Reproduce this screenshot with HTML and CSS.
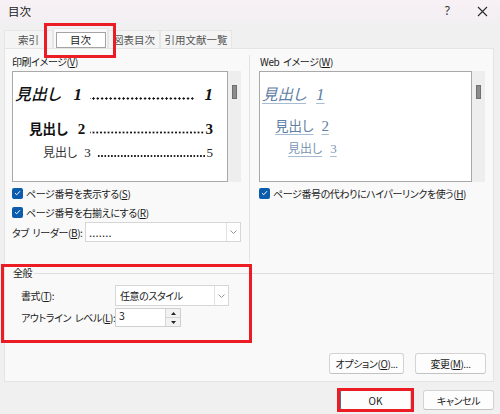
FILE: index.html
```html
<!DOCTYPE html>
<html lang="ja">
<head>
<meta charset="utf-8">
<title>目次</title>
<link rel="stylesheet" href="styles.css">
</head>
<body>
<div class="window">
  <header class="titlebar">
    <span class="title">目次</span>
    <span class="help">?</span>
    <span class="close"><svg width="11" height="11" viewBox="0 0 11 11"><path d="M1 1L10 10M10 1L1 10" stroke="#2b2b2b" stroke-width="1.1" fill="none"/></svg></span>
  </header>
  <nav class="tabs">
    <div class="tab t1">索引</div>
    <div class="tab t2 active"><span class="tab-focus">目次</span></div>
    <div class="tab t3">図表目次</div>
    <div class="tab t4">引用文献一覧</div>
  </nav>
  <main class="panel">
    <div class="columns">
      <section class="col col-left">
        <div class="cap">印刷イメージ(<u>V</u>)</div>
        <div class="preview-wrap">
          <div class="preview print">
            <div class="toc p1"><span class="head">見出し</span><span class="num">1</span><span class="dots"></span><span class="pg">1</span></div>
            <div class="toc p2"><span class="head">見出し</span><span class="num">2</span><span class="dots"></span><span class="pg">3</span></div>
            <div class="toc p3"><span class="head">見出し</span><span class="num">3</span><span class="dots"></span><span class="pg">5</span></div>
          </div>
          <div class="vscroll"><div class="thumb"></div></div>
        </div>
        <div class="check-row"><span class="cb"><svg width="7" height="6" viewBox="0 0 7 6"><path d="M1 3.2L2.7 4.8L6 1.2" stroke="#fff" stroke-width="1" fill="none"/></svg></span><span>ページ番号を表示する(<u>S</u>)</span></div>
        <div class="check-row"><span class="cb"><svg width="7" height="6" viewBox="0 0 7 6"><path d="M1 3.2L2.7 4.8L6 1.2" stroke="#fff" stroke-width="1" fill="none"/></svg></span><span>ページ番号を右揃えにする(<u>R</u>)</span></div>
        <div class="leader-row">
          <span class="leader-lbl">タブ リーダー(<u>B</u>):</span>
          <div class="select leader"><span class="sel-text">.......</span><span class="sel-arrow"><svg width="7" height="4" viewBox="0 0 7 4"><path d="M0.5 0.5L3.5 3.5L6.5 0.5" stroke="#8a8a8a" stroke-width="0.9" fill="none"/></svg></span></div>
        </div>
      </section>
      <div class="vsep"></div>
      <section class="col col-right">
        <div class="cap">Web イメージ(<u>W</u>)</div>
        <div class="preview-wrap">
          <div class="preview web">
            <div class="wl w1"><span>見出し<span class="num">1</span></span></div>
            <div class="wl w2"><span>見出し<span class="num">2</span></span></div>
            <div class="wl w3"><span>見出し<span class="num">3</span></span></div>
          </div>
          <div class="vscroll"><div class="thumb"></div></div>
        </div>
        <div class="check-row"><span class="cb"><svg width="7" height="6" viewBox="0 0 7 6"><path d="M1 3.2L2.7 4.8L6 1.2" stroke="#fff" stroke-width="1" fill="none"/></svg></span><span>ページ番号の代わりにハイパーリンクを使う(<u>H</u>)</span></div>
      </section>
    </div>
    <section class="group">
      <div class="legend"><span class="legend-text">全般</span><span class="legend-line"></span></div>
      <div class="g-row">
        <span class="g-lbl">書式(<u>T</u>):</span>
        <div class="select style-sel"><span class="sel-text">任意のスタイル</span><span class="sel-arrow"><svg width="7" height="4" viewBox="0 0 7 4"><path d="M0.5 0.5L3.5 3.5L6.5 0.5" stroke="#8a8a8a" stroke-width="0.9" fill="none"/></svg></span></div>
      </div>
      <div class="g-row g-row2">
        <span class="g-lbl">アウトライン レベル(<u>L</u>):</span>
        <div class="spin">
          <span class="spin-val">3</span>
          <span class="spin-btns">
            <span class="spin-btn"><svg width="5" height="3" viewBox="0 0 5 3"><path d="M0 3L2.5 0L5 3Z" fill="#222"/></svg></span>
            <span class="spin-btn"><svg width="5" height="3" viewBox="0 0 5 3"><path d="M0 0L2.5 3L5 0Z" fill="#222"/></svg></span>
          </span>
        </div>
      </div>
    </section>
    <div class="actions">
      <button class="btn opt">オプション(<u>O</u>)...</button>
      <button class="btn mod">変更(<u>M</u>)...</button>
    </div>
  </main>
  <footer class="footer">
    <button class="btn ok">OK</button>
    <button class="btn cancel">キャンセル</button>
  </footer>
  <div class="mark mark-tab"></div>
  <div class="mark mark-group"></div>
  <div class="mark mark-ok"></div>
</div>
</body>
</html>
```
FILE: styles.css
```css
* { box-sizing: border-box; margin: 0; padding: 0; }
html, body { width: 500px; height: 414px; overflow: hidden; }
body {
  background: #f0f0f0;
  font-family: "Noto Sans CJK JP", "Noto Sans", sans-serif;
  font-size: 10px;
  letter-spacing: -0.4px;
  word-spacing: 2px;
  color: #1b1b1b;
  font-feature-settings: "palt";
}
u { text-decoration: underline; text-underline-offset: 1px; }
.window {
  position: relative;
  width: 500px;
  height: 414px;
  display: flex;
  flex-direction: column;
  background: #f0f0f0;
}
/* title bar */
.titlebar {
  height: 22px;
  display: flex;
  align-items: center;
  padding-left: 8px;
  padding-right: 12px;
  background: linear-gradient(#f8f1f5, #f3eff2);
}
.title { font-size: 11.5px; letter-spacing: 0; flex: 1; line-height: 20px; }
.help { font-size: 12px; letter-spacing: 0; color: #333; margin-right: 27px; line-height: 20px; font-family: "Noto Sans", sans-serif; }
.close { display: flex; align-items: center; }
/* tabs */
.tabs {
  height: 26px;
  display: flex;
  align-items: flex-end;
  padding-left: 4px;
}
.tab {
  height: 18px;
  display: flex;
  align-items: center;
  justify-content: center;
  color: #555;
  background: #f4f4f4;
  border: 1px solid #e6e6e6;
  border-bottom: none;
  font-size: 10.5px;
  letter-spacing: 0;
}
.t1 { width: 49px; }
.t2 { width: 55px; height: 20px; background: #f9f9f9; border-color: #e6e6e6; }
.t3 { width: 52px; }
.t4 { width: 72px; }
.tab-focus {
  width: 50px;
  height: 16px;
  margin-top: 2px;
  display: flex;
  align-items: center;
  justify-content: center;
  background: #fff;
  border: 1px solid #a3a3a3;
  color: #1b1b1b;
}
/* panel */
.panel {
  width: 490px;
  height: 334px;
  margin-left: 4px;
  background: #f9f9f9;
  border: 1px solid #e4e4e4;
  display: flex;
  flex-direction: column;
}
.columns {
  height: 213px;
  display: flex;
  padding: 6px 7px 0 7px;
}
.col-left { width: 229px; }
.col-right { width: 226px; }
.vsep { width: 1px; background: #e2e2e2; margin: 0 9px 0 8px; }
.cap { height: 14px; line-height: 14px; margin-bottom: 2px; }
.col-right .cap { padding-left: 1px; }
.preview-wrap { height: 111px; display: flex; }
.preview {
  flex: 1;
  background: #fff;
  border: 1px solid #a9a9a9;
  overflow: hidden;
  letter-spacing: 0;
  word-spacing: 0;
}
.vscroll { width: 13px; background: #eeeeee; }
.thumb {
  width: 5px;
  height: 14px;
  margin: 14px 0 0 4px;
  background: #8c8c8c;
  border: 1px solid #6f6f6f;
}
/* print preview */
.print { padding: 11px 14px 0 2px; }
.toc {
  display: flex;
  align-items: baseline;
  white-space: nowrap;
  font-family: "Liberation Serif", "Noto Sans CJK JP", serif;
  color: #111;
}
.toc .dots {
  flex: 1;
  height: 3px;
  margin-right: 3px;
  background-repeat: repeat-x;
  background-position: right bottom;
}
.p1 { font-size: 17px; line-height: 20px; font-style: italic; font-weight: bold; }
.p1 .head { font-family: "Noto Sans CJK JP", sans-serif; font-weight: 500; font-style: italic; font-size: 16px; }
.p1 .num { margin-left: 13px; margin-right: 8px; }
.p1 .pg { margin-left: 7px; }
.p1 .dots {
  height: 3px;
  background-image: radial-gradient(circle at 50% 50%, #111 0.95px, transparent 1.35px);
  background-size: 4.3px 3px;
}
.p2 { font-size: 15px; line-height: 20px; font-weight: bold; margin-top: 13px; padding-left: 14px; }
.p2 .head { font-family: "Noto Sans CJK JP", sans-serif; font-weight: 700; font-size: 13.5px; }
.p2 .num { margin-left: 10px; margin-right: 5px; }
.p2 .dots {
  margin-right: 1px;
  height: 3px;
  background-image: radial-gradient(circle at 50% 50%, #111 0.85px, transparent 1.25px);
  background-size: 3.75px 3px;
}
.p3 { font-size: 13px; line-height: 16px; margin-top: 5px; padding-left: 28px; color: #222; }
.p3 .head { font-family: "Noto Sans CJK JP", sans-serif; font-size: 12px; color: #333; }
.p3 .num { margin-left: 7px; margin-right: 6px; }
.p3 .dots {
  margin-right: 1px;
  height: 2px;
  background-image: radial-gradient(circle at 50% 50%, #222 0.65px, transparent 1.05px);
  background-size: 3.3px 2px;
}
/* web preview */
.web { padding: 11px 0 0 2px; }
.wl {
  font-family: "Liberation Serif", "Noto Sans CJK JP", serif;
  color: #5f80a6;
  white-space: nowrap;
}
.wl > span {
  text-decoration: underline;
  text-decoration-color: #a7bcd2;
  text-underline-offset: 3px;
}
.wl .num { margin-left: 10px; }
.w1 { font-size: 17px; line-height: 20px; font-style: italic; }
.w1 > span { font-family: "Noto Sans CJK JP", sans-serif; font-size: 15.5px; font-style: italic; }
.w1 .num { font-family: "Liberation Serif", serif; font-size: 17px; }
.w2 { font-size: 15px; line-height: 20px; margin-top: 10px; padding-left: 13px; }
.w2 > span { font-family: "Noto Sans CJK JP", sans-serif; font-size: 13.5px; }
.w2 .num { font-family: "Liberation Serif", serif; font-size: 15px; margin-left: 8px; }
.w3 { font-size: 13px; line-height: 16px; margin-top: 4px; padding-left: 26px; color: #7b96b6; }
.w3 > span { font-family: "Noto Sans CJK JP", sans-serif; font-size: 12px; }
.w3 .num { font-family: "Liberation Serif", serif; font-size: 13px; margin-left: 8px; }
/* checkboxes */
.check-row {
  height: 16px;
  margin-top: 3px;
  display: flex;
  align-items: center;
  white-space: nowrap;
}
.cb {
  width: 11px;
  height: 11px;
  margin-right: 3px;
  border-radius: 2px;
  background: #0b5cad;
  display: flex;
  align-items: center;
  justify-content: center;
}
/* selects */
.leader-row {
  height: 20px;
  margin-top: 2px;
  display: flex;
  align-items: center;
}
.leader-lbl { width: 73px; white-space: nowrap; }
.select {
  height: 100%;
  display: flex;
  background: #fff;
  border: 1px solid #d6d6d6;
}
.leader { width: 156px; }
.sel-text { flex: 1; padding-left: 3px; display: flex; align-items: center; white-space: nowrap; }
.leader .sel-text { letter-spacing: 0.2px; font-size: 11px; }
.sel-arrow {
  width: 14px;
  border-left: 1px solid #e2e2e2;
  display: flex;
  align-items: center;
  justify-content: center;
}
/* group */
.group { display: flex; flex-direction: column; }
.legend {
  height: 14px;
  margin-top: 4px;
  display: flex;
  align-items: center;
  padding-left: 8px;
}
.legend-text { line-height: 14px; }
.legend-line { flex: 1; height: 1px; background: #dedede; margin-left: 2px; }
.g-row {
  height: 21px;
  margin-top: 5px;
  display: flex;
  align-items: center;
  padding-left: 16px;
}
.g-row2 { height: 19px; margin-top: 2px; }
.g-lbl { width: 94px; white-space: nowrap; }
.style-sel { width: 114px; }
.style-sel .sel-text { padding-left: 4px; }
.spin {
  width: 66px;
  height: 100%;
  display: flex;
  background: #fff;
  border: 1px solid #cfcfcf;
}
.spin-val { flex: 1; padding-left: 3px; line-height: 14px; font-size: 10.5px; }
.spin-btns { width: 15px; display: flex; flex-direction: column; border-left: 1px solid #d6d6d6; }
.spin-btn {
  flex: 1;
  display: flex;
  align-items: center;
  justify-content: center;
  background: #f2f2f2;
}
.spin-btn + .spin-btn { border-top: 1px solid #d6d6d6; }
/* buttons */
.btn {
  height: 21px;
  font-family: inherit;
  font-size: 10px;
  letter-spacing: -0.4px;
  font-feature-settings: "palt";
  color: #1b1b1b;
  background: #fdfdfd;
  border: 1px solid #d3d3d3;
  border-bottom-color: #c2c2c2;
  border-radius: 3px;
  display: flex;
  align-items: center;
  justify-content: center;
  white-space: nowrap;
}
.actions {
  margin-top: 26px;
  display: flex;
  justify-content: flex-end;
  gap: 11px;
  padding-right: 7px;
}
.opt { width: 75px; }
.mod { width: 71px; }
.footer {
  display: flex;
  justify-content: flex-end;
  gap: 12px;
  padding: 8px 6px 0 0;
}
.footer .btn { width: 71px; height: 20px; }
.ok { border-left: 1px solid #4d6e99; border-radius: 2px; letter-spacing: 0; }
/* annotation marks */
.mark { position: absolute; border: 3px solid #ec1c24; }
.mark-tab { left: 44px; top: 23px; width: 72px; height: 35px; }
.mark-group { left: 1px; top: 264px; width: 251px; height: 79px; }
.mark-ok { left: 337px; top: 388px; width: 77px; height: 24px; }
```
